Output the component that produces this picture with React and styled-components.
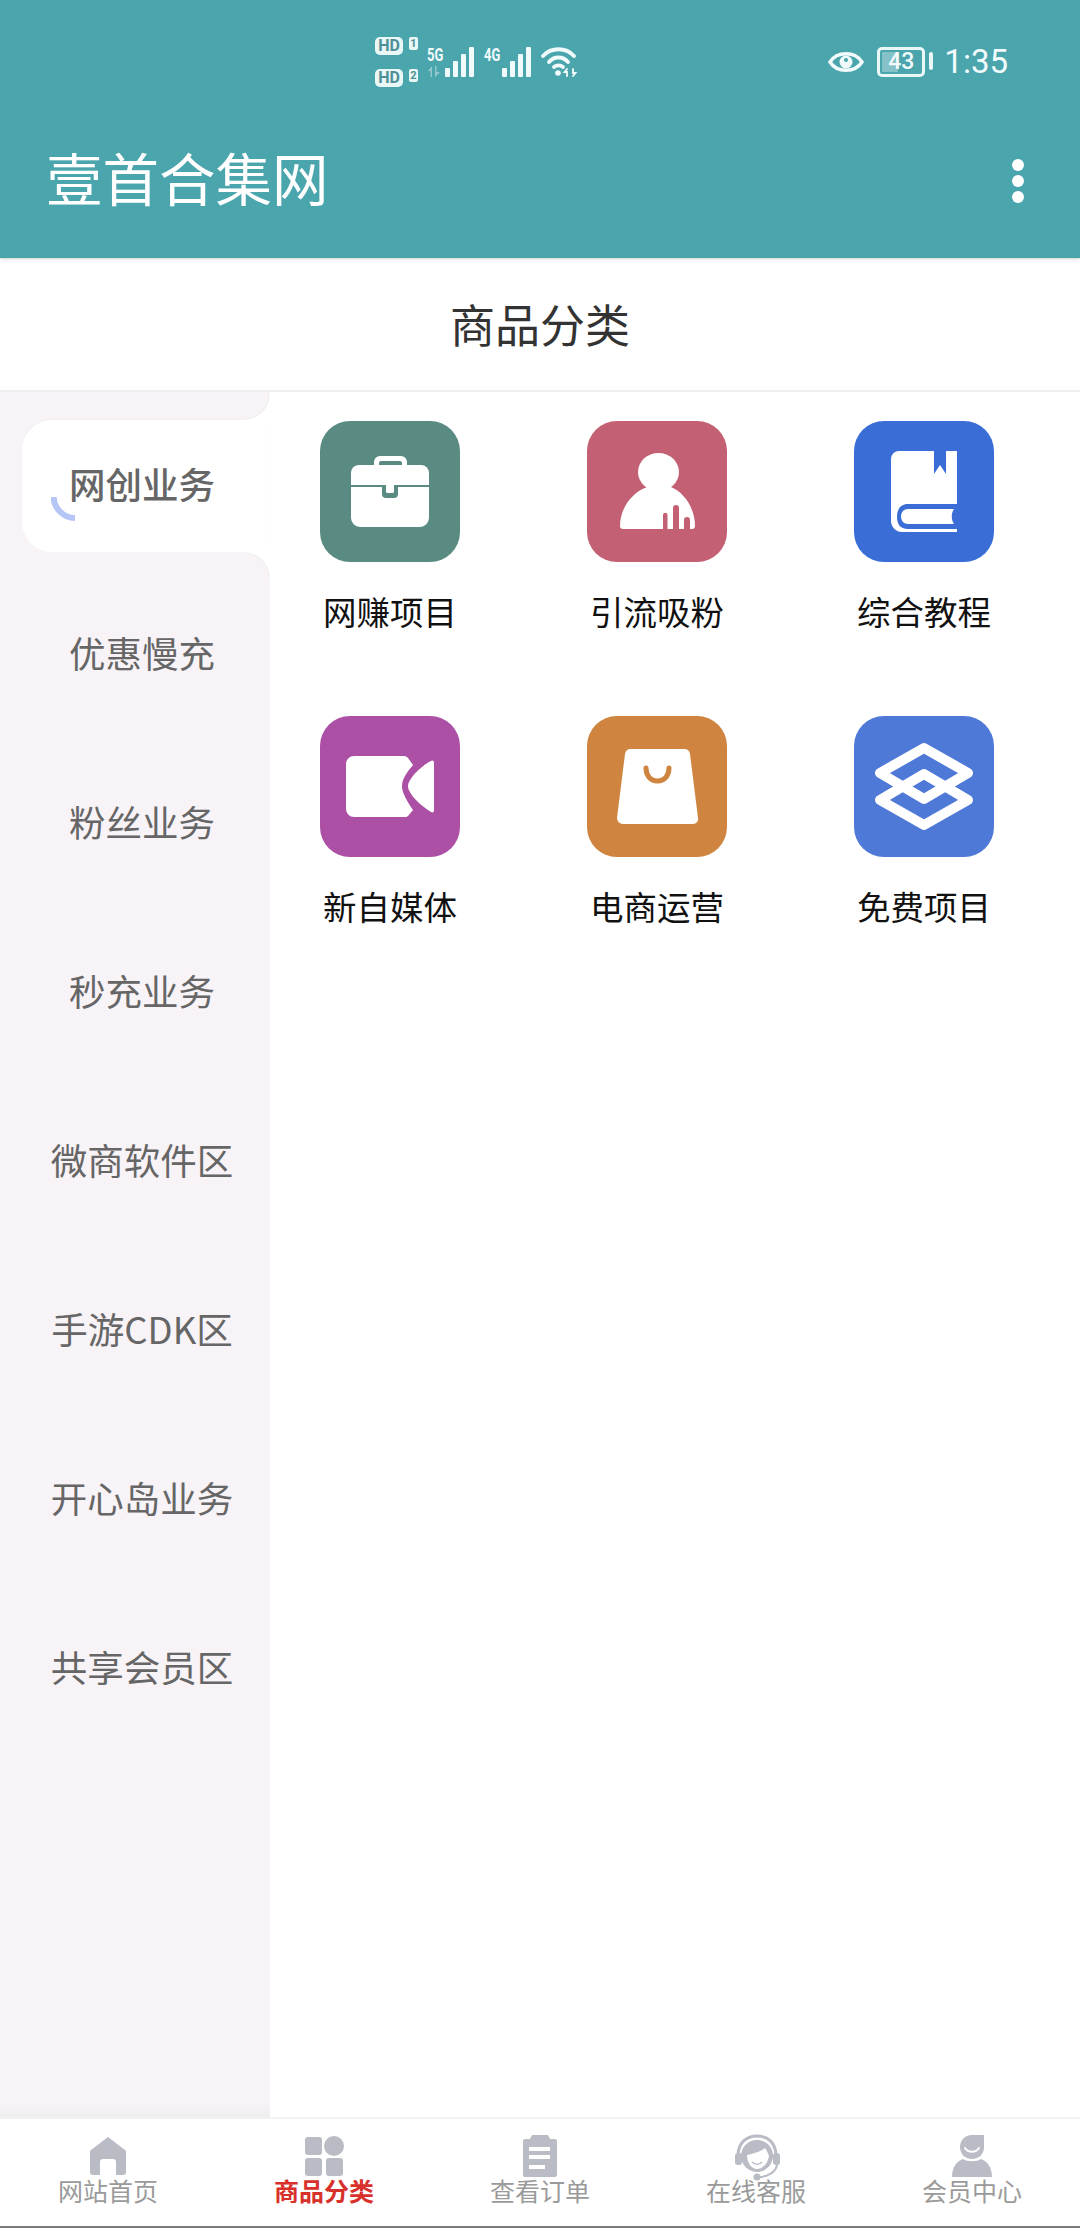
import React from "react";
import styled, { createGlobalStyle } from "styled-components";

const TEAL = "#4aa5ad";
const SIDE = "#f8f3f7";
const FONT = `"Noto Sans CJK SC", "Noto Sans", sans-serif`;

const Global = createGlobalStyle`
  html, body {
    margin: 0;
    padding: 0;
    background: #fff;
    font-family: ${FONT};
  }
`;

const Page = styled.div`
  width: 1080px;
  height: 2228px;
  display: flex;
  flex-direction: column;
  overflow: hidden;
`;

const Top = styled.header`
  background: ${TEAL};
  box-shadow: 0 1px 3px rgba(0, 0, 0, 0.18);
  position: relative;
  z-index: 2;
`;

const StatusBar = styled.div`
  height: 124px;
  display: flex;
  align-items: center;
  justify-content: space-between;
  padding: 0 72px 0 375px;
  color: #f2fbfb;
`;

const StatusGroup = styled.div`
  display: flex;
  align-items: center;
  gap: ${(p) => p.gap || 0}px;
`;

const SimCol = styled.div`
  display: flex;
  flex-direction: column;
  gap: 14px;
`;

const SimRow = styled.div`
  display: flex;
  align-items: flex-start;
  gap: 6px;
`;

const HdBadge = styled.span`
  width: 28px;
  height: 18px;
  border-radius: 5px;
  background: #e9f7f7;
  color: #4f8f96;
  font: 700 16px/18px "Roboto", sans-serif;
  text-align: center;
`;

const SimNum = styled.span`
  width: 9px;
  height: 13px;
  border-radius: 2px;
  background: #e9f7f7;
  color: #4f8f96;
  font: 700 11px/13px "Roboto", sans-serif;
  text-align: center;
`;

const Signal = styled.div`
  display: flex;
  align-items: flex-start;
  height: 30px;
`;

const NetCol = styled.div`
  width: 17px;
  height: 30px;
  display: flex;
  flex-direction: column;
  justify-content: space-between;
`;

const NetLabel = styled.span`
  font: 700 18px/16px "Roboto", sans-serif;
  display: block;
  white-space: nowrap;
  transform: scaleX(0.72);
  transform-origin: left top;
`;

const Battery = styled.div`
  width: 48px;
  height: 30px;
  box-sizing: border-box;
  border: 3px solid #eaf7f7;
  border-radius: 5px;
  position: relative;
  display: flex;
  align-items: center;
  justify-content: center;
  font: 500 23px/24px "Roboto", sans-serif;
  color: #f2fbfb;
  &::before {
    content: "";
    position: absolute;
    left: 2px;
    top: 2px;
    bottom: 2px;
    width: 16px;
    background: rgba(255, 255, 255, 0.32);
  }
  &::after {
    content: "";
    position: absolute;
    right: -11px;
    top: 2px;
    width: 4px;
    height: 18px;
    border-radius: 2px;
    background: #eaf7f7;
  }
`;

const Clock = styled.span`
  font: 400 33px/36px "Roboto", sans-serif;
  margin-left: 6px;
`;

const AppBar = styled.div`
  height: 134px;
  box-sizing: border-box;
  padding: 0 56px 20px 46px;
  display: flex;
  align-items: center;
  justify-content: space-between;
`;

const AppTitle = styled.h1`
  margin: 0 0 10px;
  color: #fff;
  font-size: 56.500px;
  font-weight: 400;
  line-height: 72px;
`;

const Kebab = styled.div`
  display: flex;
  flex-direction: column;
  gap: 4px;
  span {
    width: 12px;
    height: 12px;
    border-radius: 50%;
    background: #fff;
  }
`;

const PageHead = styled.div`
  height: 134px;
  display: flex;
  align-items: center;
  justify-content: center;
  border-bottom: 2px solid #eeeeee;
  box-sizing: border-box;
  padding-bottom: 2px;
  color: #333;
  font-size: 45px;
`;

const Body = styled.div`
  flex: 1;
  display: flex;
  min-height: 0;
`;

const Side = styled.aside`
  width: 270px;
  box-sizing: border-box;
  padding-top: 28px;
  display: flex;
  flex-direction: column;
  gap: 37px;
  background: linear-gradient(to bottom, ${SIDE} 0, ${SIDE} calc(100% - 14px), #eeeeef 100%);
`;

const SideItem = styled.div`
  height: 132px;
  box-sizing: border-box;
  margin-left: 22px;
  padding: 0 8px 6px 0;
  flex: none;
  position: relative;
  display: flex;
  align-items: center;
  justify-content: center;
  font-size: 36.500px;
  font-weight: ${(p) => (p.$active ? 500 : 400)};
  color: #666;
  background: ${(p) => (p.$active ? "#fff" : "transparent")};
  border-radius: 30px 0 0 30px;
  box-shadow: ${(p) => (p.$active ? "0 -1px 2px rgba(0,0,0,0.03)" : "none")};

  ${(p) =>
    p.$active &&
    `
    &::before, &::after {
      content: "";
      position: absolute;
      right: 0;
      width: 26px;
      height: 26px;
    }
    &::before {
      top: -26px;
      background: radial-gradient(circle at 0 0, ${SIDE} 24px, #ececec 25px, #fff 26px);
    }
    &::after {
      bottom: -26px;
      background: radial-gradient(circle at 0 100%, ${SIDE} 24px, #ececec 25px, #fff 26px);
    }
  `}
`;

const Spinner = styled.svg`
  position: absolute;
  left: 29px;
  top: 77px;
  width: 24px;
  height: 25px;
`;

const Grid = styled.main`
  flex: 1;
  box-sizing: border-box;
  padding: 29px 0 0 50px;
  display: grid;
  grid-template-columns: repeat(3, 140px);
  grid-auto-rows: 295px;
  column-gap: 127px;
  align-content: start;
`;

const Cat = styled.div`
  display: flex;
  flex-direction: column;
  align-items: center;
`;

const Tile = styled.div`
  width: 140px;
  height: 141px;
  border-radius: 30px;
  background: ${(p) => p.$bg};
  svg {
    display: block;
    width: 140px;
    height: 141px;
  }
`;

const CatName = styled.span`
  margin-top: 29px;
  font-size: 33.500px;
  line-height: 40px;
  color: #111;
  white-space: nowrap;
`;

const Tabs = styled.nav`
  height: 111px;
  flex: none;
  box-sizing: border-box;
  border-top: 2px solid #f2f2f2;
  border-bottom: 2px solid #7b7b7b;
  display: grid;
  grid-template-columns: repeat(5, 216px);
  background: #fff;
`;

const Tab = styled.div`
  display: flex;
  flex-direction: column;
  align-items: center;
  padding-top: 15px;
  svg {
    display: block;
    width: 50px;
    height: 42px;
    overflow: visible;
  }
`;

const TabLabel = styled.span`
  font-size: 25px;
  line-height: 30px;
  margin-top: -1px;
  color: ${(p) => (p.$on ? "#d8302b" : "#9a9a9a")};
  font-weight: ${(p) => (p.$on ? 700 : 400)};
`;

const Bars = () => (
  <svg width="31" height="30" viewBox="0 0 31 30" fill="#f2fbfb">
    <rect x="1" y="21" width="5" height="9" rx="1" />
    <rect x="9" y="14" width="5" height="16" rx="1" />
    <rect x="17" y="7" width="5" height="23" rx="1" />
    <rect x="25" y="0" width="5" height="30" rx="1" />
  </svg>
);

const DataArrows = () => (
  <svg width="14" height="11" viewBox="0 0 14 11" fill="rgba(255,255,255,0.4)">
    <path d="M1 5 L5 0 V11 H3.500 V5 Z" />
    <path d="M8 0 H9.500 V6 H13 L8 11 Z" />
  </svg>
);

const Wifi = () => (
  <svg width="36" height="32" viewBox="0 0 36 32" fill="none" stroke="#f2fbfb" strokeWidth="3.8" strokeLinecap="round">
    <path d="M2 10 C10 1 25 1 33 10" />
    <path d="M8 16 C13 10 22 10 27 16" />
    <path d="M13 21 C15.500 19 19.500 19 22 21" />
    <circle cx="17" cy="27" r="2.800" fill="#f2fbfb" stroke="none" />
    <path d="M26 23l-2.500 3h2.500v4M32 30l2.500-3H32v-4" strokeWidth="1.800" />
  </svg>
);

const Eye = () => (
  <svg width="36" height="24" viewBox="0 0 36 24" fill="none">
    <path d="M2 12 C9 1 27 1 34 12 C27 23 9 23 2 12 Z" stroke="#f2fbfb" strokeWidth="3.500" />
    <circle cx="18" cy="12" r="6.500" fill="#f2fbfb" />
    <circle cx="18" cy="10" r="2" fill={TEAL} />
  </svg>
);

const icons = {
  case: (
    <svg viewBox="0 0 140 141">
      <path d="M54 44v-3a6 6 0 0 1 6-6h21a6 6 0 0 1 6 6v3h-5v-2a2 2 0 0 0-2-2H61a2 2 0 0 0-2 2v2z" fill="#fff" />
      <path d="M39 44h62a8 8 0 0 1 8 8v12H31V52a8 8 0 0 1 8-8z" fill="#fff" />
      <path d="M31 66h31v7a4 4 0 0 0 4 4h8a4 4 0 0 0 4-4v-7h31v31a9 9 0 0 1-9 9H40a9 9 0 0 1-9-9z" fill="#fff" />
      <rect x="66" y="60" width="8" height="12" rx="1.500" fill="#fff" />
    </svg>
  ),
  person: (
    <svg viewBox="0 0 140 141">
      <ellipse cx="71.500" cy="51" rx="20.500" ry="19" fill="#fff" />
      <path d="M33 105 C33 88 44 72 60 66 L84 66 C98 72 108 88 108 105 a3 3 0 0 1-3 3 H36 a3 3 0 0 1-3-3z" fill="#fff" />
      <path d="M76 108V94a2.200 2.200 0 0 1 4.500 0v14zM86 108V87a3 3 0 0 1 6 0v21zM97 108v-9a3 3 0 0 1 6 0v9z" fill="#c46073" />
    </svg>
  ),
  book: (
    <svg viewBox="0 0 140 141">
      <path d="M45 30h58v53H54c-8 0-11 6-11 13s3 12 11 12h49v3H48c-6 0-11-5-11-11V38a8 8 0 0 1 8-8z" fill="#fff" />
      <path d="M54 88h46c-3 4-3 11 0 15H54c-4 0-7-3-7-7.500S50 88 54 88z" fill="#fff" />
      <path d="M80 30h12v23l-6-9-6 9z" fill="#3b6dd6" />
    </svg>
  ),
  video: (
    <svg viewBox="0 0 140 141">
      <path d="M34 40h50c2 0 3 1 4 2l5 7c-6 7-11 14-11 21s5 15 11 24l-5 6c-1 1-2 1-4 1H34a8 8 0 0 1-8-8V48a8 8 0 0 1 8-8z" fill="#fff" />
      <path d="M111 45c2-1 3 0 3 2v47c0 2-1 3-3 2C101 90 88 78 88 70c0-7 13-20 23-25z" fill="#fff" />
    </svg>
  ),
  bag: (
    <svg viewBox="0 0 140 141">
      <path d="M44 33h53a6 6 0 0 1 6 5l8 64a5 5 0 0 1-5 6H36a6 6 0 0 1-6-6l8-64a6 6 0 0 1 6-5z" fill="#fff" />
      <path d="M59 52c0 7 4 13 11.500 13S82 59 82 52" fill="none" stroke="#cf853f" strokeWidth="5" strokeLinecap="round" />
    </svg>
  ),
  layers: (
    <svg viewBox="0 0 140 141" fill="none" stroke="#fff" strokeWidth="10" strokeLinejoin="round">
      <path d="M70 32 L114 57 L70 83 L26 57 Z" />
      <path d="M70 58 L114 84 L70 109 L26 84 Z" />
    </svg>
  ),
};

const GREY = "#b9bbc5";

const tabIcons = {
  home: (
    <svg viewBox="0 0 50 42" fill={GREY}>
      <path d="M25 3 L42 16 a3 3 0 0 1 1 3 V38 a3 3 0 0 1-3 3 H33 V28 a3 3 0 0 0-3-3 H20 a3 3 0 0 0-3 3 V41 H10 a3 3 0 0 1-3-3 V19 a3 3 0 0 1 1-3 Z" />
    </svg>
  ),
  grid: (
    <svg viewBox="0 0 50 42" fill={GREY}>
      <rect x="6" y="3" width="17" height="18" rx="3" />
      <circle cx="35" cy="12" r="10" />
      <rect x="6" y="24" width="17" height="18" rx="3" />
      <rect x="27" y="24" width="17" height="18" rx="3" />
    </svg>
  ),
  clip: (
    <svg viewBox="0 0 50 42" fill={GREY}>
      <path d="M17 1h16l2 4h5a2 2 0 0 1 2 2v34a2 2 0 0 1-2 2H10a2 2 0 0 1-2-2V7a2 2 0 0 1 2-2h5z" />
      <path d="M14 13h21v4H14zM14 21h21v4H14zM14 31h16v4H14z" fill="#fff" />
    </svg>
  ),
  head: (
    <svg viewBox="0 0 50 42" fill={GREY}>
      <path d="M7 22 C7 9 15 2 26 2 C37 2 45 9 45 22" fill="none" stroke={GREY} strokeWidth="3" />
      <path d="M26 6 C35 6 42 13 42 22 C42 31 34 38 26 38 C18 38 10 31 10 22 C10 13 17 6 26 6Z" />
      <path d="M16 21 C22 20 31 17 34 14 C36 17 37 19 38 22 C37 29 32 35 26 35 C20 35 16 28 16 21Z" fill="#fff" />
      <path d="M21 28 C24 31 28 31 31 28" fill="none" stroke={GREY} strokeWidth="1.600" />
      <rect x="4" y="19" width="7" height="12" rx="3" />
      <rect x="42" y="19" width="7" height="12" rx="3" />
      <path d="M46 31 C45 38 36 43 28 43" fill="none" stroke={GREY} strokeWidth="2" />
      <circle cx="26" cy="43" r="3.500" />
    </svg>
  ),
  user: (
    <svg viewBox="0 0 50 42" fill={GREY}>
      <path d="M25 1 H37 V13 C37 20 32 25 25 25 C18 25 13 20 13 13 C13 6 18 1 25 1Z" />
      <path d="M18 14 C21 19 29 19 32 14" fill="none" stroke="#fff" strokeWidth="2" strokeLinecap="round" />
      <path d="M16 25 C20 28 30 28 34 25 C40 27 45 33 45 43 H5 C5 33 10 27 16 25Z" />
    </svg>
  ),
};

const sideItems = ["网创业务", "优惠慢充", "粉丝业务", "秒充业务", "微商软件区", "手游CDK区", "开心岛业务", "共享会员区"];

const cats = [
  { name: "网赚项目", bg: "#5a8b82", icon: "case" },
  { name: "引流吸粉", bg: "#c46073", icon: "person" },
  { name: "综合教程", bg: "#3b6dd6", icon: "book" },
  { name: "新自媒体", bg: "#ac50a5", icon: "video" },
  { name: "电商运营", bg: "#cf853f", icon: "bag" },
  { name: "免费项目", bg: "#4f79d6", icon: "layers" },
];

const tabs = [
  { label: "网站首页", icon: "home" },
  { label: "商品分类", icon: "grid", on: true },
  { label: "查看订单", icon: "clip" },
  { label: "在线客服", icon: "head" },
  { label: "会员中心", icon: "user" },
];

export default function App() {
  return (
    <Page>
      <Global />
      <Top>
        <StatusBar>
          <StatusGroup gap={9}>
            <SimCol>
              <SimRow>
                <HdBadge>HD</HdBadge>
                <SimNum>1</SimNum>
              </SimRow>
              <SimRow>
                <HdBadge>HD</HdBadge>
                <SimNum>2</SimNum>
              </SimRow>
            </SimCol>
            <Signal>
              <NetCol>
                <NetLabel>5G</NetLabel>
                <DataArrows />
              </NetCol>
              <Bars />
            </Signal>
            <Signal>
              <NetCol>
                <NetLabel>4G</NetLabel>
              </NetCol>
              <Bars />
            </Signal>
            <Wifi />
          </StatusGroup>
          <StatusGroup gap={13}>
            <Eye />
            <Battery>43</Battery>
            <Clock>1:35</Clock>
          </StatusGroup>
        </StatusBar>
        <AppBar>
          <AppTitle>壹首合集网</AppTitle>
          <Kebab>
            <span />
            <span />
            <span />
          </Kebab>
        </AppBar>
      </Top>
      <PageHead>商品分类</PageHead>
      <Body>
        <Side>
          {sideItems.map((name, i) => (
            <SideItem key={name} $active={i === 0}>
              {i === 0 && (
                <Spinner viewBox="0 0 24 25" fill="none">
                  <path d="M3 0 C2 10 12 21 24 21" stroke="#b4c5f6" strokeWidth="6" />
                </Spinner>
              )}
              {name}
            </SideItem>
          ))}
        </Side>
        <Grid>
          {cats.map((c) => (
            <Cat key={c.name}>
              <Tile $bg={c.bg}>{icons[c.icon]}</Tile>
              <CatName>{c.name}</CatName>
            </Cat>
          ))}
        </Grid>
      </Body>
      <Tabs>
        {tabs.map((t) => (
          <Tab key={t.label}>
            {tabIcons[t.icon]}
            <TabLabel $on={t.on}>{t.label}</TabLabel>
          </Tab>
        ))}
      </Tabs>
    </Page>
  );
}
